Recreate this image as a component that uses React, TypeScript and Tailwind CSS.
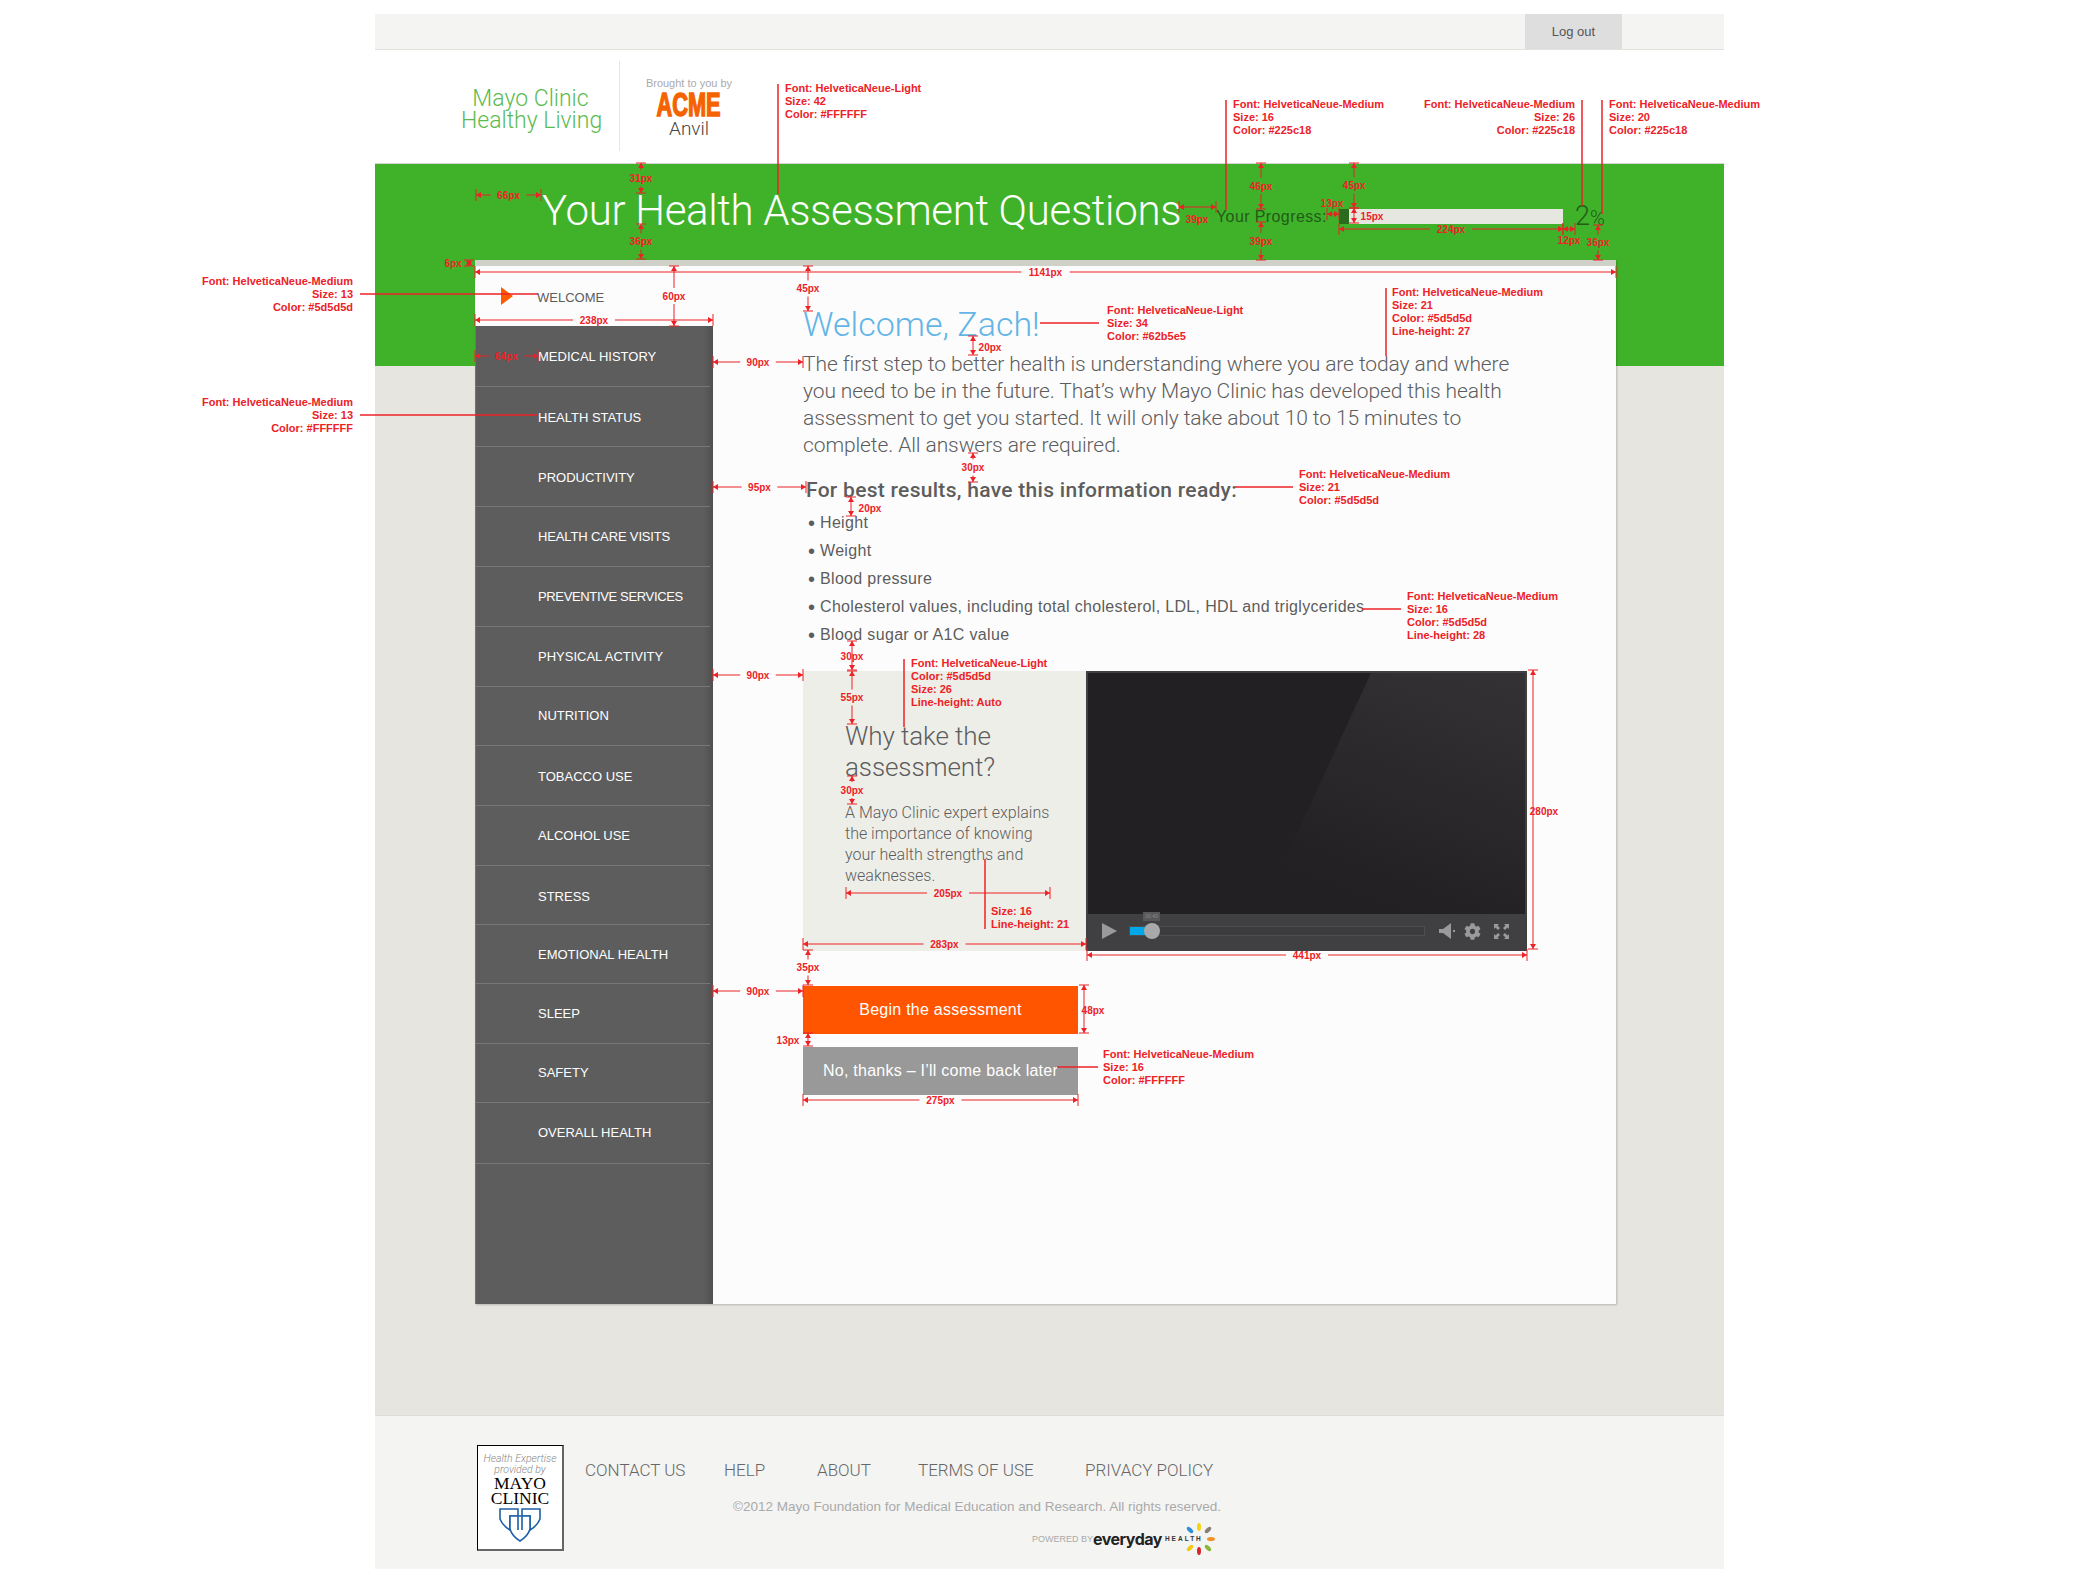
import { FaCog } from "react-icons/fa";

const light = "font-['Roboto','Liberation_Sans',sans-serif] font-light";
const medium = "font-['Liberation_Sans',Arial,sans-serif]";

const navItems = [
  { label: "MEDICAL HISTORY", h: "h-[61px]", extra: "pt-[2px]" },
  { label: "HEALTH STATUS", h: "h-[60px]", extra: "pt-[3px]" },
  { label: "PRODUCTIVITY", h: "h-[60px]", extra: "pt-[2px]" },
  { label: "HEALTH CARE VISITS", h: "h-[60px]", extra: "pt-0 tracking-[-0.15px]" },
  { label: "PREVENTIVE SERVICES", h: "h-[60px]", extra: "pt-0 tracking-[-0.35px]" },
  { label: "PHYSICAL ACTIVITY", h: "h-[60px]", extra: "pt-0" },
  { label: "NUTRITION", h: "h-[59px]", extra: "pt-0" },
  { label: "TOBACCO USE", h: "h-[60px]", extra: "pt-[2px]" },
  { label: "ALCOHOL USE", h: "h-[60px]", extra: "pt-0" },
  { label: "STRESS", h: "h-[59px]", extra: "pt-[3px]" },
  { label: "EMOTIONAL HEALTH", h: "h-[59px]", extra: "pt-[2px]" },
  { label: "SLEEP", h: "h-[60px]", extra: "pt-0" },
  { label: "SAFETY", h: "h-[59px]", extra: "pt-0" },
  { label: "OVERALL HEALTH", h: "h-[61px]", extra: "pt-0" },
];

const bullets = [
  "Height",
  "Weight",
  "Blood pressure",
  "Cholesterol values, including total cholesterol, LDL, HDL and triglycerides",
  "Blood sugar or A1C value",
];

const footerLinks = [
  { label: "CONTACT US", w: "w-[139px]" },
  { label: "HELP", w: "w-[93px]" },
  { label: "ABOUT", w: "w-[101px]" },
  { label: "TERMS OF USE", w: "w-[167px]" },
  { label: "PRIVACY POLICY", w: "w-[135px]" },
];

const RED = "#ec2227";

// redline notes, x/y is the first line's baseline
const notes: { x: number; y: number; end?: boolean; lines: string[] }[] = [
  { x: 785, y: 92, lines: ["Font: HelveticaNeue-Light", "Size: 42", "Color: #FFFFFF"] },
  { x: 1233, y: 108, lines: ["Font: HelveticaNeue-Medium", "Size: 16", "Color: #225c18"] },
  { x: 1575, y: 108, end: true, lines: ["Font: HelveticaNeue-Medium", "Size: 26", "Color: #225c18"] },
  { x: 1609, y: 108, lines: ["Font: HelveticaNeue-Medium", "Size: 20", "Color: #225c18"] },
  { x: 1107, y: 314, lines: ["Font: HelveticaNeue-Light", "Size: 34", "Color: #62b5e5"] },
  { x: 1392, y: 296, lines: ["Font: HelveticaNeue-Medium", "Size: 21", "Color: #5d5d5d", "Line-height: 27"] },
  { x: 353, y: 285, end: true, lines: ["Font: HelveticaNeue-Medium", "Size: 13", "Color: #5d5d5d"] },
  { x: 353, y: 406, end: true, lines: ["Font: HelveticaNeue-Medium", "Size: 13", "Color: #FFFFFF"] },
  { x: 1299, y: 478, lines: ["Font: HelveticaNeue-Medium", "Size: 21", "Color: #5d5d5d"] },
  { x: 1407, y: 600, lines: ["Font: HelveticaNeue-Medium", "Size: 16", "Color: #5d5d5d", "Line-height: 28"] },
  { x: 911, y: 667, lines: ["Font: HelveticaNeue-Light", "Color: #5d5d5d", "Size: 26", "Line-height: Auto"] },
  { x: 991, y: 915, lines: ["Size: 16", "Line-height: 21"] },
  { x: 1103, y: 1058, lines: ["Font: HelveticaNeue-Medium", "Size: 16", "Color: #FFFFFF"] },
];

const leaders = [
  [778, 84, 778, 194],
  [1226, 100, 1226, 210],
  [1582, 100, 1582, 206],
  [1602, 100, 1602, 214],
  [1040, 323, 1099, 323],
  [1386, 288, 1386, 356],
  [360, 294, 538, 294],
  [360, 415, 538, 415],
  [1235, 487, 1293, 487],
  [1362, 609, 1401, 609],
  [904, 659, 904, 727],
  [985, 859, 985, 929],
  [1057, 1067, 1098, 1067],
];

// lx / ly move the label off the line when it doesn't sit in a gap
type Dim = { a: number; b: number; at: number; label: string; lx?: number; ly?: number };

const hDims: Dim[] = [
  { a: 476, b: 541, at: 195, label: "66px" },
  { a: 475, b: 1616, at: 272, label: "1141px" },
  { a: 475, b: 713, at: 320, label: "238px" },
  { a: 475, b: 538, at: 356, label: "64px" },
  { a: 713, b: 803, at: 362, label: "90px" },
  { a: 713, b: 806, at: 487, label: "95px" },
  { a: 713, b: 803, at: 675, label: "90px" },
  { a: 713, b: 803, at: 991, label: "90px" },
  { a: 1179, b: 1216, at: 207, label: "39px", lx: 1197, ly: 219 },
  { a: 1327, b: 1339, at: 214, label: "13px", lx: 1332, ly: 203 },
  { a: 1339, b: 1563, at: 229, label: "224px" },
  { a: 1563, b: 1575, at: 229, label: "12px", lx: 1569, ly: 240 },
  { a: 846, b: 1050, at: 893, label: "205px" },
  { a: 803, b: 1086, at: 944, label: "283px" },
  { a: 1087, b: 1527, at: 955, label: "441px" },
  { a: 803, b: 1078, at: 1100, label: "275px" },
];

const vDims: Dim[] = [
  { a: 163, b: 193, at: 641, label: "31px" },
  { a: 224, b: 259, at: 641, label: "36px" },
  { a: 266, b: 326, at: 674, label: "60px" },
  { a: 266, b: 311, at: 808, label: "45px" },
  { a: 260, b: 266, at: 469, label: "6px", lx: 453, ly: 263 },
  { a: 163, b: 209, at: 1261, label: "46px" },
  { a: 222, b: 260, at: 1261, label: "39px" },
  { a: 163, b: 208, at: 1354, label: "45px" },
  { a: 208, b: 223, at: 1354, label: "15px", lx: 1372, ly: 216 },
  { a: 225, b: 260, at: 1598, label: "36px" },
  { a: 336, b: 355, at: 973, label: "20px", lx: 990, ly: 347 },
  { a: 453, b: 482, at: 973, label: "30px" },
  { a: 497, b: 516, at: 851, label: "20px", lx: 870, ly: 508 },
  { a: 641, b: 670, at: 852, label: "30px", lx: 852, ly: 656 },
  { a: 671, b: 724, at: 852, label: "55px" },
  { a: 776, b: 804, at: 852, label: "30px" },
  { a: 670, b: 949, at: 1533, label: "280px", lx: 1544, ly: 811 },
  { a: 950, b: 985, at: 808, label: "35px" },
  { a: 985, b: 1033, at: 1084, label: "48px", lx: 1093, ly: 1010 },
  { a: 1033, b: 1046, at: 808, label: "13px", lx: 788, ly: 1040 },
];

function HDimension({ a, b, at, label, lx, ly }: Dim) {
  const mid = (a + b) / 2;
  const half = label.length * 3.2 + 5;
  const inline = lx === undefined;
  return (
    <g>
      {inline ? (
        <>
          <line x1={a} y1={at} x2={mid - half} y2={at} stroke={RED} />
          <line x1={mid + half} y1={at} x2={b} y2={at} stroke={RED} />
        </>
      ) : (
        <line x1={a} y1={at} x2={b} y2={at} stroke={RED} />
      )}
      <line x1={a} y1={at - 6} x2={a} y2={at + 6} stroke={RED} />
      <line x1={b} y1={at - 6} x2={b} y2={at + 6} stroke={RED} />
      <polygon points={`${a},${at} ${a + 5},${at - 3} ${a + 5},${at + 3}`} fill={RED} />
      <polygon points={`${b},${at} ${b - 5},${at - 3} ${b - 5},${at + 3}`} fill={RED} />
      <text x={lx ?? mid} y={(ly ?? at) + 3.5} textAnchor="middle" className="text-[10px] font-bold" fill={RED}>
        {label}
      </text>
    </g>
  );
}

function VDimension({ a, b, at, label, lx, ly }: Dim) {
  const mid = (a + b) / 2;
  const inline = lx === undefined;
  return (
    <g>
      {inline ? (
        <>
          <line x1={at} y1={a} x2={at} y2={mid - 8} stroke={RED} />
          <line x1={at} y1={mid + 8} x2={at} y2={b} stroke={RED} />
        </>
      ) : (
        <line x1={at} y1={a} x2={at} y2={b} stroke={RED} />
      )}
      <line x1={at - 5} y1={a} x2={at + 5} y2={a} stroke={RED} />
      <line x1={at - 5} y1={b} x2={at + 5} y2={b} stroke={RED} />
      <polygon points={`${at},${a} ${at - 3},${a + 5} ${at + 3},${a + 5}`} fill={RED} />
      <polygon points={`${at},${b} ${at - 3},${b - 5} ${at + 3},${b - 5}`} fill={RED} />
      <text x={lx ?? at} y={(ly ?? mid) + 3.5} textAnchor="middle" className="text-[10px] font-bold" fill={RED}>
        {label}
      </text>
    </g>
  );
}

function Annotations() {
  return (
    <svg
      className={`absolute inset-0 pointer-events-none ${medium}`}
      width={2100}
      height={1569}
      viewBox="0 0 2100 1569"
    >
      {leaders.map(([x1, y1, x2, y2], i) => (
        <line key={i} x1={x1} y1={y1} x2={x2} y2={y2} stroke={RED} strokeWidth={1.5} />
      ))}
      {hDims.map((d, i) => (
        <HDimension key={i} {...d} />
      ))}
      {vDims.map((d, i) => (
        <VDimension key={i} {...d} />
      ))}
      {notes.map((n, i) => (
        <text key={i} textAnchor={n.end ? "end" : "start"} className="text-[11px] font-bold" fill={RED}>
          {n.lines.map((line, j) => (
            <tspan key={j} x={n.x} y={n.y + j * 13}>
              {line}
            </tspan>
          ))}
        </text>
      ))}
    </svg>
  );
}

function Sidebar() {
  return (
    <div className="w-[238px] flex flex-col shrink-0">
      <div className="h-[60px] flex items-center pl-[26px]">
        <div className="w-0 h-0 border-y-[9px] border-y-transparent border-l-[12px] border-l-[#ff5a00]" />
        <span className={`ml-[24px] mt-[4px] text-[13px] text-[#5d5d5d] ${medium}`}>WELCOME</span>
      </div>
      <div className="flex-1 bg-[linear-gradient(90deg,#8a8a8a_0,#5d5d5d_1px,#5d5d5d_228px,#505050_238px)]">
        {navItems.map((item) => (
          <div key={item.label} className={`${item.h} pr-[3px] pl-px`}>
            <div className={`h-full flex items-center border-b border-[#777] pl-[62px] text-[13px] text-white ${medium} ${item.extra}`}>
              {item.label}
            </div>
          </div>
        ))}
      </div>
    </div>
  );
}

function VideoPlayer() {
  return (
    <div className="w-[441px] h-[280px] bg-[#404042] flex flex-col pt-[2px] px-[2px]">
      <div className="h-[241px] bg-[#222022] overflow-hidden">
        <svg width={437} height={241} viewBox="0 0 437 241">
          <defs>
            <linearGradient id="glare" x1="1" y1="0" x2="0.6" y2="1">
              <stop offset="0" stopColor="#343234" />
              <stop offset="1" stopColor="#222022" />
            </linearGradient>
          </defs>
          <polygon points="283,0 437,0 437,241 172,241" fill="url(#glare)" />
        </svg>
      </div>
      <div className="relative h-[36px] pb-[2px] flex items-center pl-[14px]">
        <div className="w-0 h-0 border-y-[8px] border-y-transparent border-l-[15px] border-l-[#9a9a9c]" />
        <div className="relative ml-[12px] w-[296px] h-[10px] bg-[#3c3c3e] border border-[#4e4e50]">
          <div className="w-[16px] h-full bg-[#00a8e8]" />
          <div className="absolute left-[14px] top-[-4px] w-[16px] h-[16px] rounded-full bg-[#a9a9ab]" />
          <div className="absolute left-[13px] top-[-15px] w-[17px] h-[9px] bg-[#58585a] text-[5px] leading-[9px] text-center text-[#888]">
            00:40
          </div>
        </div>
        <svg className="ml-[14px]" width={16} height={16} viewBox="0 0 16 16" fill="#9a9a9c">
          <polygon points="0,6 4,6 12,0 12,16 4,10 0,10" />
          <rect x={14} y={7} width={2} height={2} />
        </svg>
        <FaCog className="ml-[9px] text-[#9a9a9c]" size={17} />
        <svg className="ml-[13px]" width={15} height={15} viewBox="0 0 15 15" fill="#9a9a9c">
          <polygon points="0,0 5,0 3.5,1.5 6,4 4,6 1.5,3.5 0,5" />
          <polygon points="15,0 10,0 11.5,1.5 9,4 11,6 13.5,3.5 15,5" />
          <polygon points="0,15 5,15 3.5,13.5 6,11 4,9 1.5,11.5 0,10" />
          <polygon points="15,15 10,15 11.5,13.5 9,11 11,9 13.5,11.5 15,10" />
        </svg>
      </div>
    </div>
  );
}

function MainContent() {
  return (
    <div className="pl-[90px] pt-[41px] text-[#5d5d5d]">
      <h1 className={`text-[34px] leading-[34px] text-[#62b5e5] ${light}`}>Welcome, Zach!</h1>
      <p className={`mt-[10px] w-[720px] text-[21px] leading-[27px] tracking-[-0.1px] ${light}`}>
        The first step to better health is understanding where you are today and where you need to be in the
        future. That’s why Mayo Clinic has developed this health assessment to get you started. It will only take
        about 10 to 15 minutes to complete. All answers are required.
      </p>
      <h2 className="mt-[18px] ml-[3px] text-[21px] leading-[27px] tracking-[0.29px] font-medium font-['Roboto',sans-serif]">
        For best results, have this information ready:
      </h2>
      <ul className={`mt-[5px] ml-[5px] text-[16px] leading-[28px] tracking-[0.33px] ${medium}`}>
        {bullets.map((b) => (
          <li key={b} className="flex">
            <span className="w-[12px] text-[20px] tracking-normal">•</span>
            {b}
          </li>
        ))}
      </ul>
      <div className="mt-[22px] flex">
        <div className="w-[283px] h-[280px] bg-[#eeeee8] pl-[42px] pt-[50px]">
          <h3 className={`text-[26px] leading-[31px] tracking-[-0.1px] ${light}`}>
            Why take the
            <br />
            assessment?
          </h3>
          <p className={`mt-[19px] w-[205px] text-[16px] leading-[21px] ${light}`}>
            A Mayo Clinic expert explains the importance of knowing your health strengths and weaknesses.
          </p>
        </div>
        <VideoPlayer />
      </div>
      <button className={`block mt-[35px] w-[275px] h-[48px] bg-[#ff5500] text-white text-[16px] tracking-[0.25px] ${medium}`}>
        Begin the assessment
      </button>
      <button className={`block mt-[13px] w-[275px] h-[48px] bg-[#999999] text-white text-[16px] tracking-[0.25px] ${medium}`}>
        No, thanks – I’ll come back later
      </button>
    </div>
  );
}

function MayoLogo() {
  return (
    <div className="w-[87px] h-[106px] bg-white border border-black border-r-2 border-b-2 border-r-[#666] border-b-[#666] flex flex-col items-center pt-[7px] shrink-0">
      <div className={`text-[10.5px] leading-[11px] italic text-[#888] text-center whitespace-nowrap ${light}`}>
        Health Expertise
        <br />
        provided by
      </div>
      <div className="mt-px font-['Liberation_Serif',serif] text-[17.5px] leading-[15px] text-black text-center">
        MAYO
        <br />
        CLINIC
      </div>
      <svg className="mt-[2px]" width={42} height={34} viewBox="0 0 42 34" fill="#fff" stroke="#1f5fa8" strokeWidth={1.6}>
        <path d="M1 1 H19 V8 H11 V22 Q4 18 1 11 Z" />
        <path d="M41 1 H23 V8 H31 V22 Q38 18 41 11 Z" />
        <path d="M11 8 H31 V21 Q29 28 21 33 Q13 28 11 21 Z" />
        <path d="M19 8 V22 M23 8 V22" />
      </svg>
    </div>
  );
}

function Burst() {
  return (
    <svg className="-ml-[21px]" width={34} height={34} viewBox="-17 -17 34 34">
      <ellipse cx={0} cy={-12} rx={2} ry={4} fill="#f4d312" />
      <ellipse cx={9} cy={-9} rx={2} ry={4} fill="#8a7f74" transform="rotate(45 9 -9)" />
      <ellipse cx={12} cy={0} rx={4} ry={2} fill="#f0902a" />
      <ellipse cx={9} cy={9} rx={2} ry={4} fill="#8cb83a" transform="rotate(-45 9 9)" />
      <ellipse cx={0} cy={12} rx={2} ry={4} fill="#d8262c" />
      <ellipse cx={-9} cy={9} rx={2} ry={4} fill="#f4c912" transform="rotate(45 -9 9)" />
      <ellipse cx={-9} cy={-9} rx={2} ry={4} fill="#2f8fd8" transform="rotate(-45 -9 -9)" />
    </svg>
  );
}

function Footer() {
  return (
    <div className="flex-1 bg-[#f4f4f2] border-t border-[#dddddb] pl-[102px] pt-[29px] flex">
      <MayoLogo />
      <div className="ml-[21px] w-[640px]">
        <div className={`flex mt-[15px] text-[17px] leading-[20px] text-[#666] ${light}`}>
          {footerLinks.map((l) => (
            <span key={l.label} className={l.w}>
              {l.label}
            </span>
          ))}
        </div>
        <div className={`mt-[19px] ml-[148px] text-[13.5px] leading-[16px] text-[#aaa] whitespace-nowrap ${medium}`}>
          ©2012 Mayo Foundation for Medical Education and Research. All rights reserved.
        </div>
        <div className={`mt-[7px] ml-[447px] flex items-center ${medium}`}>
          <span className="text-[9px] text-[#aaa] whitespace-nowrap w-[61px] mt-[2px]">POWERED BY</span>
          <span className="text-[16px] font-bold text-[#222] font-['Inter',sans-serif] tracking-[-0.5px]">everyday</span>
          <span className="ml-[3px] text-[6.5px] font-bold tracking-[2px] text-[#333]">HEALTH</span>
          <Burst />
        </div>
      </div>
    </div>
  );
}

export default function App() {
  return (
    <div className={`relative w-[2100px] h-[1569px] bg-white overflow-hidden ${medium}`}>
      <div className="ml-[375px] w-[1349px] h-full pt-[14px] flex flex-col">
        <div className="h-[36px] shrink-0 bg-[#f4f4f2] border-b border-[#e3e3de] flex justify-end pr-[102px]">
          <div className="w-[97px] h-[35px] bg-[#dedede] flex items-center justify-center text-[13px] text-[#555]">
            Log out
          </div>
        </div>

        <div className="h-[113px] shrink-0 flex">
          <div className={`ml-[86px] mr-[19px] mt-[38px] w-[139px] text-center text-[23px] leading-[22px] text-[#5cbb50] whitespace-nowrap ${light}`}>
            Mayo Clinic
            <br />
            Healthy Living
          </div>
          <div className="mt-[11px] w-px h-[90px] bg-[#e6e6e6]" />
          <div className="w-[138px] flex flex-col items-center pt-[26px]">
            <div className="text-[11px] leading-[14px] text-[#aaa] whitespace-nowrap">Brought to you by</div>
            <div className="mt-[2px] text-[33px] leading-[26px] font-bold text-[#f56200] scale-x-[0.66] [-webkit-text-stroke:1.5px_#f56200]">
              ACME
            </div>
            <div className={`mt-px text-[19px] leading-[20px] text-[#444] ${light}`}>Anvil</div>
          </div>
        </div>

        <div className="flex-1 flex flex-col bg-[linear-gradient(#3fb22a_202px,#e6e5e0_202px)] border-t border-[#d5d5d0]">
          <div className="h-[96px] shrink-0 pt-[26px] pl-[167px] flex">
            <div className={`w-[674px] text-[42px] leading-[42px] text-white whitespace-nowrap tracking-[-0.32px] ${light}`}>
              Your Health Assessment Questions
            </div>
            <div className="w-[123px] mt-[18px] text-[16px] leading-[18px] text-[#225c18] whitespace-nowrap tracking-[0.4px]">
              Your Progress:
            </div>
            <div className="w-[224px] h-[15px] mt-[19px] bg-[#e7e7e2]">
              <div className="w-[10px] h-full bg-[#2a6b1e]" />
            </div>
            <div className={`ml-[12px] mt-[13px] h-[26px] flex items-baseline text-[#225c18] leading-[26px] ${light}`}>
              <span className="text-[27px]">2</span>
              <span className="text-[20px]">%</span>
            </div>
          </div>

          <div className="ml-[100px] w-[1141px] h-[1044px] border-t-[6px] border-[#cfd0c8] bg-[#fcfcfc] flex shadow-[1px_1px_2px_rgba(0,0,0,0.2)]">
            <Sidebar />
            <MainContent />
          </div>
          <div className="flex-1" />
          <div className="h-[154px] shrink-0 flex">
            <Footer />
          </div>
        </div>
      </div>
      <Annotations />
    </div>
  );
}
